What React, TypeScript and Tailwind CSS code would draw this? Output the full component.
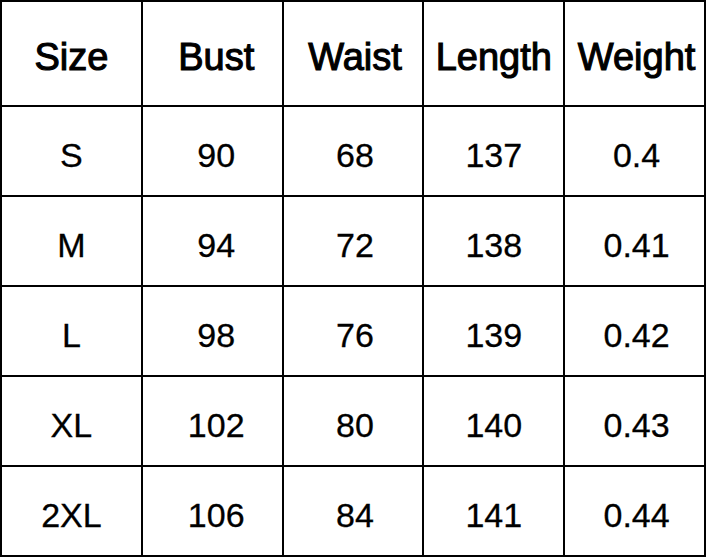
import React from "react";

const header = ["Size", "Bust", "Waist", "Length", "Weight"];
const rows = [
  ["S", "90", "68", "137", "0.4"],
  ["M", "94", "72", "138", "0.41"],
  ["L", "98", "76", "139", "0.42"],
  ["XL", "102", "80", "140", "0.43"],
  ["2XL", "106", "84", "141", "0.44"],
];

const colPad = ["", "pl-2", "pl-1", "", "pl-1"];

export default function App() {
  return (
    <div className="w-[707px] h-[557px] bg-white" style={{ fontFamily: '"Liberation Sans", Arial, sans-serif' }}>
      <div className="w-[706px] border-l-2 border-t-2 border-black grid grid-cols-5 text-black">
        {header.map((h, i) => (
          <div
            key={h}
            className={`h-[105px] border-r-2 border-b-2 border-black flex items-center justify-center pt-2 text-[38px] [-webkit-text-stroke:1.1px_black] ${colPad[i]}`}
          >
            {h}
          </div>
        ))}
        {rows.map((r) =>
          r.map((c, i) => (
            <div
              key={r[0] + i}
              className={`h-[90px] border-r-2 border-b-2 border-black flex items-center justify-center pt-2 text-[34px] [-webkit-text-stroke:0.3px_black] ${colPad[i]}`}
            >
              {c}
            </div>
          ))
        )}
      </div>
    </div>
  );
}
